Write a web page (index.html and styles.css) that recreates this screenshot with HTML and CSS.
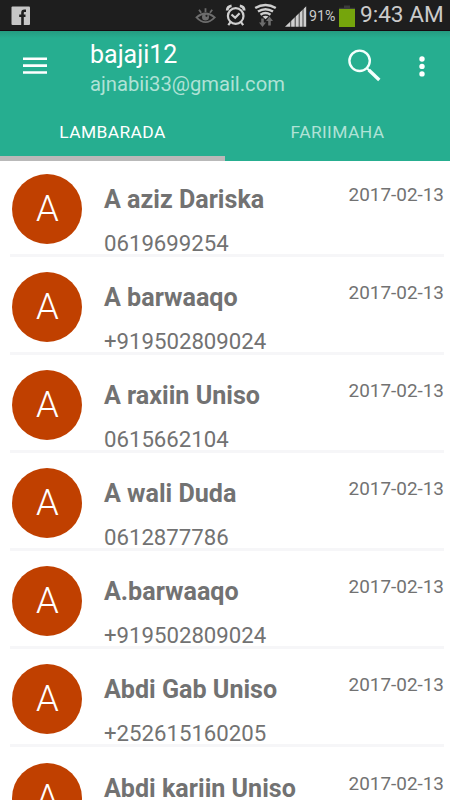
FILE: index.html
```html
<!DOCTYPE html>
<html lang="so">
<head>
    <meta charset="UTF-8">
    <meta name="viewport" content="width=device-width, initial-scale=1.0">
    <title>Lambarada</title>
    <link rel="stylesheet" href="styles.css">
</head>

<body>
    <div class="status-bar">
        <svg class="icon-facebook" width="20" height="20" viewBox="0 0 20 20">
            <rect x="0.5" y="0.5" width="18.5" height="18.5" rx="1" fill="#c6c6c6"/>
            <path d="M15 4.800h-1.600c-1.200 0-1.900.6-1.900 1.700V19M8.200 9.800h6.300" fill="none" stroke="#1e1e1e" stroke-width="2.600"/>
        </svg>
        <svg class="status-icons" width="114" height="28" viewBox="194 2 114 28">
            <!-- eye -->
            <g fill="none" stroke="#6d6d6d" stroke-width="1.800">
                <path d="M196.500 17.400Q205.500 9.500 214.700 17.400Q205.500 27 196.500 17.400Z"/>
                <path d="M205.500 8.200v4M199 9.800l2.200 3M212.200 9.800l-2.200 3"/>
                <circle cx="205.500" cy="17" r="3.500" fill="#6d6d6d" stroke="none"/>
            </g>
            <circle cx="206.500" cy="15.800" r="1.100" fill="#222"/>
            <!-- alarm -->
            <g fill="none" stroke="#d0d0d0" stroke-width="2.200">
                <circle cx="235.700" cy="16" r="7.800"/>
                <path d="M231.500 14.500l3.700 3.300 4.400-4.500M230.500 22.200l-2.200 3M241 22.200l2.200 3"/>
                <path d="M227.200 10.500q.2-4 4.400-4.600M244.200 10.500q-.2-4-4.400-4.600" stroke-width="2.800"/>
            </g>
            <!-- wifi -->
            <g fill="none" stroke="#cfcfcf" stroke-width="2.500">
                <path d="M255.200 8Q265.500 2 275.800 8"/>
                <path d="M258 11.500Q265.500 6.900 273 11.500"/>
                <path d="M260.500 14.700Q265.500 11.500 270.500 14.700"/>
            </g>
            <path d="M262.500 16.500q3-1.700 6 0l-3 2.800z" fill="#cfcfcf"/>
            <path d="M261.200 18.500h2.600v4h2.200l-3.500 4.500-3.500-4.500h2.200zM268.200 25.500h2.600V21h2.200l-3.500-4.500L266 21h2.200z" fill="#6d6d6d"/>
            <!-- signal -->
            <path d="M285 26.800L306.200 6.300V26.800z" fill="#cfcfcf"/>
            <path d="M290.700 18v9M295.200 14v13M299.200 9v18M303 6v21" stroke="#1e1e1e" stroke-width=".8"/>
        </svg>
        <span class="battery-level">91%</span>
        <svg class="icon-battery" width="16" height="23" viewBox="0 0 16 23">
            <path d="M5 0.500h6v2.300h5V5H0V2.800h5z" fill="#3b3b3b"/>
            <rect y="4" width="16" height="18" fill="#75a50c"/>
        </svg>
        <span class="clock">9:43 AM</span>
    </div>

    <header class="header">
        <div class="toolbar">
            <svg class="icon-menu" width="24" height="18" viewBox="0 0 24 18">
                <path d="M0 1.700h24M0 8.600h24M0 15.500h24" stroke="#fff" stroke-width="2.600"/>
            </svg>
            <div class="account">
                <div class="account-name">bajaji12</div>
                <div class="account-email">ajnabii33@gmail.com</div>
            </div>
            <svg class="icon-search" width="34" height="34" viewBox="0 0 34 34">
                <circle cx="11.600" cy="11.800" r="10.200" fill="none" stroke="#f4fffc" stroke-width="2.400"/>
                <path d="M19 19.200l2.500 2.500" stroke="#f4fffc" stroke-width="2"/>
                <path d="M20.800 21L31.300 31" stroke="#f4fffc" stroke-width="3.400"/>
            </svg>
            <svg class="icon-more" width="6" height="22" viewBox="0 0 6 22">
                <g fill="#fff">
                    <circle cx="3" cy="3" r="2.700"/>
                    <circle cx="3" cy="10.400" r="2.700"/>
                    <circle cx="3" cy="17.900" r="2.700"/>
                </g>
            </svg>
        </div>
        <nav class="tabs">
            <a class="tab tab-active">LAMBARADA</a>
            <a class="tab">FARIIMAHA</a>
        </nav>
    </header>

    <main class="contacts">
        <div class="contact">
            <div class="avatar">A</div>
            <div class="contact-info">
                <div class="contact-name">A aziz Dariska</div>
                <div class="contact-phone">0619699254</div>
            </div>
            <div class="contact-date">2017-02-13</div>
        </div>
        <div class="contact">
            <div class="avatar">A</div>
            <div class="contact-info">
                <div class="contact-name">A barwaaqo</div>
                <div class="contact-phone">+919502809024</div>
            </div>
            <div class="contact-date">2017-02-13</div>
        </div>
        <div class="contact">
            <div class="avatar">A</div>
            <div class="contact-info">
                <div class="contact-name">A raxiin Uniso</div>
                <div class="contact-phone">0615662104</div>
            </div>
            <div class="contact-date">2017-02-13</div>
        </div>
        <div class="contact">
            <div class="avatar">A</div>
            <div class="contact-info">
                <div class="contact-name">A wali Duda</div>
                <div class="contact-phone">0612877786</div>
            </div>
            <div class="contact-date">2017-02-13</div>
        </div>
        <div class="contact">
            <div class="avatar">A</div>
            <div class="contact-info">
                <div class="contact-name">A.barwaaqo</div>
                <div class="contact-phone">+919502809024</div>
            </div>
            <div class="contact-date">2017-02-13</div>
        </div>
        <div class="contact">
            <div class="avatar">A</div>
            <div class="contact-info">
                <div class="contact-name">Abdi Gab Uniso</div>
                <div class="contact-phone">+252615160205</div>
            </div>
            <div class="contact-date">2017-02-13</div>
        </div>
        <div class="contact">
            <div class="avatar">A</div>
            <div class="contact-info">
                <div class="contact-name">Abdi kariin Uniso</div>
            </div>
            <div class="contact-date">2017-02-13</div>
        </div>
    </main>
</body>
</html>
```
FILE: styles.css
```css
* {
    box-sizing: border-box;
}

body {
    background-color: #fff;
    color: #727272;
    font-family: Roboto, sans-serif;
    margin: 0;
    height: 800px;
    overflow: hidden;
    white-space: nowrap;
}

svg {
    display: block;
    flex-shrink: 0;
}

/* Status bar */
.status-bar {
    display: flex;
    align-items: flex-start;
    height: 31px;
    background-color: #1e1e1e;
    border-bottom: 1px solid #160a10;
    color: #cbcbcb;
}

.icon-facebook {
    margin: 6px 0 0 11px;
}

.status-icons {
    margin: 2px 0 0 163px;
}

.battery-level {
    width: 30px;
    padding-left: 1px;
    margin-top: 6px;
    font-size: 14.2px;
    line-height: 20px;
}

.icon-battery {
    margin: 5px 0 0 1px;
}

.clock {
    margin: 1px 0 0 5px;
    font-size: 22.6px;
    line-height: 28px;
}

/* Header */
.header {
    height: 130px;
    background: linear-gradient(#259b80, #26ae90 7px);
    color: #fff;
}

.toolbar {
    display: flex;
    align-items: flex-start;
    height: 72px;
}

.icon-menu {
    margin: 26px 0 0 23px;
}

.account {
    width: 257px;
    padding: 9px 0 0 43px;
}

.account-name {
    font-size: 25px;
    line-height: 30px;
}

.account-email {
    font-size: 20.2px;
    line-height: 28px;
    color: #b0e2d6;
}

.icon-search {
    margin: 18px 0 0 44px;
}

.icon-more {
    margin: 25px 0 0 37px;
}

.tabs {
    display: flex;
    height: 58px;
}

.tab {
    flex: 1;
    padding-top: 19px;
    text-align: center;
    font-size: 17.4px;
    letter-spacing: 0.4px;
    line-height: 20px;
    color: #b0e2d6;
    border-bottom: 5px solid transparent;
}

.tab-active {
    color: #fff;
    border-bottom-color: #b9b9b9;
}

/* Contacts */
.contact {
    display: flex;
    align-items: flex-start;
    height: 98.1px;
    margin: 0 6px 0 10px;
    padding: 15.5px 0 0 2.4px;
    border-bottom: 3px solid #f6f6f8;
}

.contact:first-child {
    height: 95.6px;
    padding-top: 13px;
}

.avatar {
    width: 70px;
    height: 70px;
    flex-shrink: 0;
    border-radius: 50%;
    background-color: #c04000;
    color: #fff;
    font-size: 36.5px;
    font-weight: 300;
    line-height: 70px;
    text-align: center;
}

.contact-info {
    flex: 1;
    padding: 11px 0 0 21.6px;
}

.contact-name {
    font-size: 25.1px;
    font-weight: bold;
    line-height: 30px;
}

.contact-phone {
    margin-top: 12.5px;
    font-size: 22.2px;
    line-height: 30px;
}

.contact-date {
    padding-top: 9px;
    font-size: 18.9px;
    line-height: 24px;
}
```
